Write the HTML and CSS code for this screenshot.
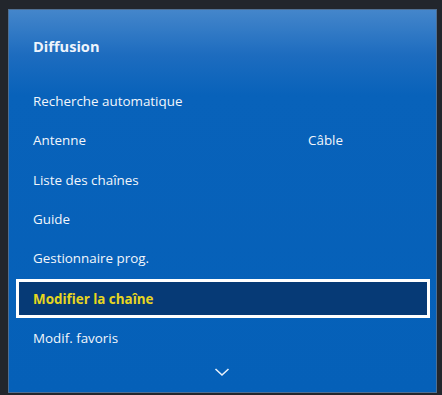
FILE: index.html
```html
<!DOCTYPE html>
<html lang="fr">
<head>
<meta charset="utf-8">
<link rel="stylesheet" href="styles.css">
</head>
<body>
<div class="panel">
  <div class="title">Diffusion</div>
  <ul class="menu">
    <li class="item">Recherche automatique</li>
    <li class="item"><span class="label">Antenne</span><span class="value">Câble</span></li>
    <li class="item">Liste des chaînes</li>
    <li class="item">Guide</li>
    <li class="item">Gestionnaire prog.</li>
    <li class="item selected">Modifier la chaîne</li>
    <li class="item">Modif. favoris</li>
  </ul>
  <div class="more">
    <svg width="16" height="10" viewBox="0 0 16 10"><path d="M1.5 2 L8 8 L14.5 2" fill="none" stroke="#e8f0fa" stroke-width="1.6"/></svg>
  </div>
</div>
</body>
</html>
```
FILE: styles.css
```css
html, body { margin: 0; padding: 0; }
body {
  background: #22262c;
  width: 442px;
  height: 395px;
  overflow: hidden;
  font-family: "Open Sans", "Liberation Sans", sans-serif;
}
.panel {
  margin: 9px 0 0 8px;
  width: 429px;
  height: 384px;
  box-sizing: border-box;
  border: 1px solid #4f6f92;
  background: linear-gradient(to bottom, #4486cb 0px, #1d6cbf 45px, #0862ba 85px, #0560b8 100%);
  color: #f2f6fb;
  display: flex;
  flex-direction: column;
}
.title {
  height: 71px;
  box-sizing: border-box;
  padding: 0 0 0 24px;
  display: flex;
  align-items: center;
  font-weight: 700;
  font-size: 14.6px;
  color: #eef4fc;
}
.menu {
  list-style: none;
  margin: 0;
  padding: 0;
  display: flex;
  flex-direction: column;
}
.item {
  height: 39px;
  display: flex;
  align-items: center;
  padding-left: 24px;
  font-size: 13.4px;
}
.item:nth-child(2) { height: 40px; }
.label { width: 275px; }
.selected {
  margin: 2px 6px 0 7px;
  height: 39px;
  box-sizing: border-box;
  border: 3px solid #ffffff;
  background: #063a76;
  color: #e6d620;
  font-weight: 700;
  padding-left: 14px;
  align-self: stretch;
}
.more {
  height: 30px;
  display: flex;
  align-items: center;
  justify-content: center;
  padding-right: 2px;
}
```
